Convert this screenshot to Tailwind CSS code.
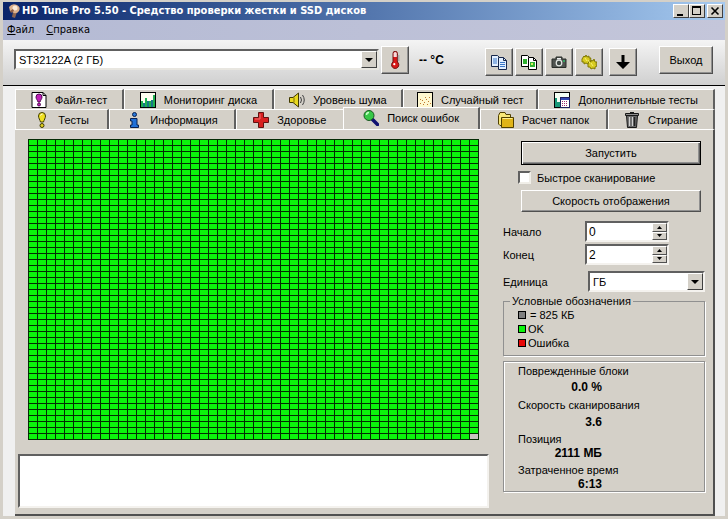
<!DOCTYPE html>
<html lang="ru">
<head>
    <meta charset="UTF-8">
    <meta name="viewport" content="width=device-width, initial-scale=1.0">
    <title>HD Tune Pro 5.50</title>
    <script src="https://cdn.jsdelivr.net/npm/@tailwindcss/browser@4"></script>
</head>
<body class="min-h-screen flex flex-col bg-[#d4d0c8] px-[3px] pt-[2px] pb-[3px] text-black text-[11px] leading-[14px] font-['Liberation_Sans',sans-serif]">

    <!-- Title bar -->
    <header class="flex items-center h-[18px] pl-[3px] pr-[2px] bg-linear-to-r from-[#0a246a] to-[#a6caf0] text-white">
        <svg class="w-4 h-4 shrink-0" viewBox="0 0 16 16">
            <path d="M7 9l-1 5 3 1 2-6z" fill="#8c6450"/>
            <path d="M3 4q3-4 8-2 4 2 2 6-2 3-5 2L4 8z" fill="#dcb08c"/>
            <circle cx="9" cy="5" r="2.500" fill="#fbead8"/>
            <path d="M4 8l3-2 1 2-3 2z" fill="#8c5c44"/>
        </svg>
        <h1 class="flex-1 font-bold text-[11px] whitespace-nowrap font-['DejaVu_Sans_Condensed','DejaVu_Sans',sans-serif]">HD Tune Pro 5.50 - Средство проверки жестки и SSD дисков</h1>
        <div class="flex">
            <button aria-label="Свернуть" class="w-4 h-[14px] bg-[#d4d0c8] border border-t-white border-l-white border-r-[#404040] border-b-[#404040]">
                <svg class="w-full h-full" viewBox="0 0 14 12" shape-rendering="crispEdges"><path d="M3 9h6v2H3z"/></svg>
            </button>
            <button aria-label="Развернуть" class="w-4 h-[14px] bg-[#d4d0c8] border border-t-white border-l-white border-r-[#404040] border-b-[#404040]">
                <svg class="w-full h-full" viewBox="0 0 14 12" shape-rendering="crispEdges"><path fill-rule="evenodd" d="M2 1h9v9H2zM3 3v6h7V3z"/></svg>
            </button>
            <button aria-label="Закрыть" class="ml-[2px] w-4 h-[14px] bg-[#d4d0c8] border border-t-white border-l-white border-r-[#404040] border-b-[#404040]">
                <svg class="w-full h-full" viewBox="0 0 14 12"><path d="M3.5 2.5l7 7M10.5 2.5l-7 7" stroke="#000" stroke-width="1.6"/></svg>
            </button>
        </div>
    </header>

    <!-- Menu -->
    <nav class="flex items-center gap-3 h-5 pl-1 bg-linear-to-r from-[#b4bad4] to-[#c4c6da] font-['DejaVu_Sans_Condensed','DejaVu_Sans',sans-serif]">
        <a href="#"><u>Ф</u>айл</a>
        <a href="#"><u>С</u>правка</a>
    </nav>

    <!-- Toolbar -->
    <div class="flex items-center h-[46px] pl-[11px] pr-3 pb-[6px] bg-linear-to-b from-[#f4f4f4] to-[#d0d0d0] border-b border-black">
        <div class="relative flex-1">
            <select aria-label="Диск" class="block appearance-none w-full h-[21px] px-[3px] bg-white border-2 border-t-[#606060] border-l-[#606060] border-r-[#e8e6e0] border-b-[#e8e6e0] leading-[16px]">
                <option>ST32122A (2 ГБ)</option>
            </select>
            <span class="absolute right-[2px] top-[2px] w-4 h-[17px] pointer-events-none bg-[#d4d0c8] border border-t-white border-l-white border-r-[#404040] border-b-[#404040]">
                <svg class="w-full h-full" viewBox="0 0 14 15"><path d="M3 6h8L7 10z"/></svg>
            </span>
        </div>
        <button aria-label="Температура" class="ml-[2px] w-7 h-7 flex items-center justify-center bg-[#d4d0c8] border border-t-white border-l-white border-r-[#505050] border-b-[#505050] shadow-[inset_-1px_-1px_#909090]">
            <svg class="w-4 h-[18px]" viewBox="0 0 16 18">
                <path d="M6 2.5a2.2 2.2 0 0 1 4.4 0V11a3.6 3.6 0 1 1-4.4 0z" fill="#d81818" stroke="#701010"/>
                <path d="M6.6 2.5a1.6 1.6 0 0 1 3.2 0V6H6.6z" fill="#f4dcdc"/>
                <circle cx="7.3" cy="13.2" r="1.1" fill="#fff"/>
                <path d="M10.5 5h2M10.5 7h2M10.5 9h2" stroke="#888"/>
            </svg>
        </button>
        <span class="ml-[10px] w-[66px] font-bold text-[12px]">-- °C</span>
        <div class="flex gap-[2px] pt-1">
            <button aria-label="Копировать текст" class="w-7 h-7 flex items-center justify-center bg-[#d4d0c8] border border-t-white border-l-white border-r-[#505050] border-b-[#505050] shadow-[inset_-1px_-1px_#909090]">
                <svg class="w-4 h-4" viewBox="0 0 16 16">
                    <path d="M.5 1.500h6l2 2v9h-8z" fill="#e4f0ff" stroke="#18284c"/>
                    <path d="M2 5h4M2 7h4M2 9h4" stroke="#3c78c8"/>
                    <path d="M7.500 3.500h5l3 3v9h-8z" fill="#e4f0ff" stroke="#18284c"/>
                    <path d="M12.500 3.500v3h3" fill="none" stroke="#18284c"/>
                    <path d="M9 8.500h5M9 10.500h5M9 12.500h5" stroke="#3c78c8"/>
                </svg>
            </button>
            <button aria-label="Копировать снимок" class="w-7 h-7 flex items-center justify-center bg-[#d4d0c8] border border-t-white border-l-white border-r-[#505050] border-b-[#505050] shadow-[inset_-1px_-1px_#909090]">
                <svg class="w-4 h-4" viewBox="0 0 16 16">
                    <path d="M.5 1.500h6l2 2v9h-8z" fill="#fff" stroke="#000"/>
                    <path d="M2 5h4v5H2z" fill="#30b030"/>
                    <path d="M7.500 3.500h5l3 3v9h-8z" fill="#fff" stroke="#000"/>
                    <path d="M12.500 3.500v3h3" fill="none" stroke="#000"/>
                    <path d="M9 8h5v5H9z" fill="#30b030"/>
                    <path d="M10 9h2v2h-2z" fill="#d8f060"/>
                </svg>
            </button>
            <button aria-label="Снимок экрана" class="w-7 h-7 flex items-center justify-center bg-[#d4d0c8] border border-t-white border-l-white border-r-[#505050] border-b-[#505050] shadow-[inset_-1px_-1px_#909090]">
                <svg class="w-4 h-4" viewBox="0 0 16 16">
                    <path d="M1 5h4V3h6v2h4v8.500H1z" fill="#505450" stroke="#282c28"/>
                    <path d="M6 4h4v1.500H6z" fill="#f0f0f0"/>
                    <circle cx="8" cy="9" r="3.400" fill="#e4e8e4"/>
                    <circle cx="8" cy="9" r="2.200" fill="#404844"/>
                    <path d="M12 6h2v2h-2z" fill="#38a060"/>
                </svg>
            </button>
            <button aria-label="Настройки" class="w-7 h-7 flex items-center justify-center bg-[#d4d0c8] border border-t-white border-l-white border-r-[#505050] border-b-[#505050] shadow-[inset_-1px_-1px_#909090]">
                <svg class="w-4 h-4" viewBox="0 0 16 16">
                    <g stroke="#807800" fill="#d8cc20">
                        <path d="M1 5l2-3 1 1 1-2 1 2 2-1 0 2 2 0-1 2 1 2-2 0-1 2-2-1-2 1 0-2-2 0z"/>
                        <path d="M7 10l1-3 2 1 0-2 2 1 1-2 1 3 2 0-1 2 1 2-2 1 0 2-2-1-2 1-1-2-2 0z"/>
                    </g>
                    <path d="M4 4l2 3M10 9l2 3M7 6l2 3" stroke="#f8f070"/>
                </svg>
            </button>
        </div>
        <button aria-label="Свернуть в трей" class="ml-[6px] mt-1 w-7 h-7 flex items-center justify-center bg-[#d4d0c8] border border-t-white border-l-white border-r-[#505050] border-b-[#505050] shadow-[inset_-1px_-1px_#909090]">
            <svg class="w-[14px] h-4" viewBox="0 0 14 16"><path d="M5.500 1h3v7H14L7 15 0 8h5.500z"/></svg>
        </button>
        <button class="ml-[22px] w-[54px] h-7 bg-[#d4d0c8] border border-t-white border-l-white border-r-[#505050] border-b-[#505050] shadow-[inset_-1px_-1px_#909090]">Выход</button>
    </div>

    <main class="flex-1 flex flex-col pl-3 pr-[10px] pt-[3px] bg-[#f0f0f0]">
        <!-- Tabs -->
        <div class="grid grid-cols-[109fr_149fr_129fr_135fr_176fr] h-5 bg-[#d4d0c8]">
            <button class="flex items-center justify-center gap-2 border-t border-l border-t-white border-l-white border-r-2 border-r-[#606060] whitespace-nowrap">
                <svg class="w-4 h-4" viewBox="0 0 16 16">
                    <path d="M1 .5h11l3 3v12H1z" fill="#fff" stroke="#000"/>
                    <path d="M12 .5v3h3" fill="none" stroke="#000"/>
                    <path d="M5 5a3 3 0 0 1 6 0c0 2-1.500 3-2 5H7c-.5-2-2-3-2-5z" fill="#c020b8" stroke="#500850"/>
                    <circle cx="8" cy="12.500" r="1.500" fill="#c020b8" stroke="#500850"/>
                </svg>
                Файл-тест
            </button>
            <button class="flex items-center justify-center gap-2 border-t border-l border-t-white border-l-white border-r-2 border-r-[#606060] whitespace-nowrap">
                <svg class="w-4 h-4" viewBox="0 0 16 16" shape-rendering="crispEdges">
                    <path d="M.5.5h15v15H.5z" fill="#fffff0" stroke="#000"/>
                    <path d="M1 9h2v6H1zM5 6h2v9H5zM9 9h2v6H9zM13 3h2v12h-2z" fill="#20b050"/>
                    <path d="M3 11h2v4H3zM7 9h2v6H7zM11 8h2v7h-2z" fill="#187888"/>
                </svg>
                Мониторинг диска
            </button>
            <button class="flex items-center justify-center gap-2 border-t border-l border-t-white border-l-white border-r-2 border-r-[#606060] whitespace-nowrap">
                <svg class="w-4 h-4" viewBox="0 0 16 16">
                    <path d="M.5 5.500H4L9.500 1v14L4 10.500H.5z" fill="#e8d820" stroke="#403800"/>
                    <path d="M5 5.500v5" stroke="#807000"/>
                    <path d="M11.500 5q2 3 0 6M13.500 3q3.500 5 0 10" fill="none" stroke="#404040"/>
                </svg>
                Уровень шума
            </button>
            <button class="flex items-center justify-center gap-2 border-t border-l border-t-white border-l-white border-r-2 border-r-[#606060] whitespace-nowrap">
                <svg class="w-4 h-4" viewBox="0 0 16 16" shape-rendering="crispEdges">
                    <path d="M.5.5h15v15H.5z" fill="#fff8d0" stroke="#000"/>
                    <path d="M3 11h1v1H3zM5 8h1v1H5zM7 10h1v1H7zM9 7h1v1H9zM11 9h1v1h-1zM12 5h1v1h-1zM6 12h1v1H6zM10 12h1v1h-1zM3 7h1v1H3zM13 11h1v1h-1zM8 5h1v1H8z" fill="#c07830"/>
                </svg>
                Случайный тест
            </button>
            <button class="flex items-center justify-center gap-2 border-t border-l border-t-white border-l-white border-r-2 border-r-[#606060] whitespace-nowrap">
                <svg class="w-4 h-4" viewBox="0 0 16 16" shape-rendering="crispEdges">
                    <path d="M.5.5h15v15H.5z" fill="#f4fff4" stroke="#000"/>
                    <path d="M1 6h2v9H1zM3 10h3v5H3z" fill="#189878"/>
                    <path d="M6.500 5.500h9v10h-9z" fill="#fff" stroke="#202060"/>
                    <path d="M7 6h8v2H7z" fill="#3048b0"/>
                    <path d="M8 9h1v1H8zM10 9h1v1h-1zM12 9h1v1h-1zM8 11h1v1H8zM10 11h1v1h-1zM12 11h1v1h-1zM8 13h1v1H8zM10 13h1v1h-1zM12 13h1v1h-1z" fill="#a02870"/>
                </svg>
                Дополнительные тесты
            </button>
        </div>
        <div class="grid grid-cols-[94fr_126fr_107fr_137fr_127fr_107fr] h-5 bg-[#d4d0c8]">
            <button class="flex items-center justify-center gap-2 border-t border-l border-t-white border-l-white border-r-2 border-r-[#606060] whitespace-nowrap">
                <svg class="w-4 h-4" viewBox="0 0 16 16">
                    <path d="M4.500 4a3.500 3.500 0 0 1 7 0c0 2-1.500 4-2 6h-3c-.5-2-2-4-2-6z" fill="#f0e020" stroke="#403c00"/>
                    <path d="M6.500 3.500q.5-1.500 2-1.500" fill="none" stroke="#fff"/>
                    <circle cx="8" cy="13.500" r="2" fill="#e0d020" stroke="#403c00"/>
                </svg>
                Тесты
            </button>
            <button class="flex items-center justify-center gap-2 border-t border-l border-t-white border-l-white border-r-2 border-r-[#606060] whitespace-nowrap">
                <svg class="w-4 h-4" viewBox="0 0 16 16">
                    <circle cx="8.500" cy="2.500" r="2" fill="#2878d8" stroke="#082050"/>
                    <path d="M4.500 6.500h6.500v6.500H12.500v2.500H4.500V13h1.500V9H4.500z" fill="#2070d8" stroke="#082050"/>
                </svg>
                Информация
            </button>
            <button class="flex items-center justify-center gap-2 border-t border-l border-t-white border-l-white whitespace-nowrap">
                <svg class="w-4 h-4" viewBox="0 0 16 16">
                    <path d="M5.500.5h5v5h5v5h-5v5h-5v-5h-5v-5h5z" fill="#d82020" stroke="#601010"/>
                    <path d="M7 2v5H2" fill="none" stroke="#f07070"/>
                </svg>
                Здоровье
            </button>
            <button class="-mt-[2px] flex items-center justify-center gap-2 pb-[2px] bg-[#d4d0c8] border-t border-l border-t-white border-l-white border-r-2 border-r-[#606060] whitespace-nowrap">
                <svg class="w-4 h-4" viewBox="0 0 16 16">
                    <path d="M9.500 9.500l5 5" stroke="#101070" stroke-width="3.500" stroke-linecap="round"/>
                    <circle cx="6" cy="5.500" r="5" fill="#38c848" stroke="#185820"/>
                    <path d="M3.500 5q0-2.500 2.500-2.500" fill="none" stroke="#c8ffc8" stroke-width="1.500"/>
                </svg>
                Поиск ошибок
            </button>
            <button class="flex items-center justify-center gap-2 border-t border-l border-t-white border-l-white border-r-2 border-r-[#606060] whitespace-nowrap">
                <svg class="w-4 h-4" viewBox="0 0 16 16">
                    <path d="M.5 3.500l1.500-3h5l1 2h4.500v11H2L.5 12z" fill="#f8e878" stroke="#504000"/>
                    <path d="M3.500 5.500h12v10h-12z" fill="#e0b418" stroke="#504000"/>
                    <path d="M4.500 6.500h10" stroke="#fff090"/>
                </svg>
                Расчет папок
            </button>
            <button class="flex items-center justify-center gap-2 border-t border-l border-t-white border-l-white border-r-2 border-r-[#606060] whitespace-nowrap">
                <svg class="w-4 h-4" viewBox="0 0 16 16">
                    <path d="M2.500 3.500h11l-1 12h-9z" fill="#686868" stroke="#181818"/>
                    <path d="M1.500 1.500h13v2h-13zM6 .5h4" fill="#909090" stroke="#181818"/>
                    <path d="M5.500 5v9M8.500 5v9" stroke="#d0d0d0" stroke-width="1.200"/>
                    <path d="M10.500 5v9" stroke="#202020" stroke-width="1.500"/>
                </svg>
                Стирание
            </button>
        </div>

        <!-- Error scan page -->
        <section class="flex-1 flex gap-[14px] pt-[9px] pl-[3px] pr-2 pb-[6px] bg-[#d4d0c8] border-t border-t-white border-r-2 border-r-[#505050] border-b-2 border-b-[#505050]">
            <div class="flex-1 flex flex-col gap-[14px]">
                <div class="px-[10px]">
                    <svg class="block w-full h-[301px]" viewBox="0 0 451 301" preserveAspectRatio="none" shape-rendering="crispEdges" role="img" aria-label="Карта блоков">
                        <defs>
                            <pattern id="block" width="9" height="6" patternUnits="userSpaceOnUse">
                                <rect width="9" height="6" fill="#042c04"/>
                                <rect x="1" y="1" width="8" height="5" fill="#0cf40c"/>
                            </pattern>
                        </defs>
                        <rect width="451" height="301" fill="url(#block)"/>
                        <rect x="442" y="295" width="8" height="5" fill="#c8c4c0"/>
                    </svg>
                </div>
                <textarea aria-label="Журнал" class="flex-1 resize-none bg-white border-2 border-t-[#606060] border-l-[#606060] border-r-[#f4f2ee] border-b-[#f4f2ee]"></textarea>
            </div>

            <div class="w-[202px] flex flex-col">
                <div class="flex flex-col pl-[15px] pr-1 pt-[2px]">
                    <button class="ml-[3px] h-6 bg-[#d4d0c8] border border-black shadow-[inset_1px_1px_#fff,inset_-1px_-1px_#606060,inset_-2px_-2px_#909090]">Запустить</button>
                    <label class="flex items-center gap-[6px] h-[25px]">
                        <input type="checkbox" class="appearance-none w-[13px] h-[13px] bg-white border-2 border-t-[#606060] border-l-[#606060] border-r-[#f0eee8] border-b-[#f0eee8]">
                        Быстрое сканирование
                    </label>
                    <button class="ml-[3px] h-[22px] bg-[#d4d0c8] border border-t-white border-l-white border-r-[#505050] border-b-[#505050] shadow-[inset_-1px_-1px_#909090]">Скорость отображения</button>
                </div>

                <div class="flex flex-col gap-[2px] mt-[9px]">
                    <div class="flex items-center">
                        <label for="start" class="w-[82px]">Начало</label>
                        <div class="flex w-[84px] h-[21px] bg-white border-2 border-t-[#606060] border-l-[#606060] border-r-[#f4f2ee] border-b-[#f4f2ee]">
                            <input id="start" type="text" value="0" class="flex-1 min-w-0 px-[2px] text-[12px] outline-none">
                            <div class="w-[15px] flex flex-col">
                                <button aria-label="Больше" class="flex-1 flex items-center justify-center bg-[#d4d0c8] border border-t-white border-l-white border-r-[#505050] border-b-[#505050]"><svg class="w-[5px] h-[3px]" viewBox="0 0 5 3"><path d="M0 3h5L2.500 0z"/></svg></button>
                                <button aria-label="Меньше" class="flex-1 flex items-center justify-center bg-[#d4d0c8] border border-t-white border-l-white border-r-[#505050] border-b-[#505050]"><svg class="w-[5px] h-[3px]" viewBox="0 0 5 3"><path d="M0 0h5L2.500 3z"/></svg></button>
                            </div>
                        </div>
                    </div>
                    <div class="flex items-center">
                        <label for="end" class="w-[82px]">Конец</label>
                        <div class="flex w-[84px] h-[21px] bg-white border-2 border-t-[#606060] border-l-[#606060] border-r-[#f4f2ee] border-b-[#f4f2ee]">
                            <input id="end" type="text" value="2" class="flex-1 min-w-0 px-[2px] text-[12px] outline-none">
                            <div class="w-[15px] flex flex-col">
                                <button aria-label="Больше" class="flex-1 flex items-center justify-center bg-[#d4d0c8] border border-t-white border-l-white border-r-[#505050] border-b-[#505050]"><svg class="w-[5px] h-[3px]" viewBox="0 0 5 3"><path d="M0 3h5L2.500 0z"/></svg></button>
                                <button aria-label="Меньше" class="flex-1 flex items-center justify-center bg-[#d4d0c8] border border-t-white border-l-white border-r-[#505050] border-b-[#505050]"><svg class="w-[5px] h-[3px]" viewBox="0 0 5 3"><path d="M0 0h5L2.500 3z"/></svg></button>
                            </div>
                        </div>
                    </div>
                    <div class="flex items-center mt-1">
                        <label for="unit" class="w-[85px]">Единица</label>
                        <div class="relative flex-1">
                            <select id="unit" class="block appearance-none w-full h-[21px] px-[3px] bg-white border-2 border-t-[#606060] border-l-[#606060] border-r-[#f4f2ee] border-b-[#f4f2ee] leading-[16px]">
                                <option>ГБ</option>
                            </select>
                            <span class="absolute right-[2px] top-[2px] w-4 h-[17px] pointer-events-none bg-[#d4d0c8] border border-t-white border-l-white border-r-[#404040] border-b-[#404040]">
                                <svg class="w-full h-full" viewBox="0 0 14 15"><path d="M3 6h8L7 10z"/></svg>
                            </span>
                        </div>
                    </div>
                </div>

                <fieldset class="mt-[2px] pl-[14px] pb-[5px] border border-[#909090] shadow-[1px_1px_#fff]">
                    <legend class="-ml-2 px-[2px]">Условные обозначения</legend>
                    <ul>
                        <li class="flex items-center gap-1"><span class="w-2 h-2 bg-[#808080] border border-black"></span>= 825 КБ</li>
                        <li class="flex items-center gap-[2px]"><span class="w-2 h-2 bg-[#0cf40c] border border-black"></span>OK</li>
                        <li class="flex items-center gap-[2px]"><span class="w-2 h-2 bg-[#e80808] border border-black"></span>Ошибка</li>
                    </ul>
                </fieldset>

                <dl class="mt-[5px] pl-[14px] pt-[2px] border border-[#909090] shadow-[1px_1px_#fff,inset_1px_1px_#fff] [&>dd]:w-[84px] [&>dd]:text-right [&>dd]:text-[12px] [&>dd]:leading-[14px] [&>dd]:font-bold [&>dd]:whitespace-nowrap">
                    <dt>Поврежденные блоки</dt>
                    <dd class="mt-[2px]">0.0 %</dd>
                    <dt class="mt-1">Скорость сканирования</dt>
                    <dd class="mt-[3px]">3.6</dd>
                    <dt class="mt-[3px]">Позиция</dt>
                    <dd>2111 МБ</dd>
                    <dt class="mt-[3px]">Затраченное время</dt>
                    <dd>6:13</dd>
                </dl>
            </div>
        </section>
    </main>
</body>
</html>
